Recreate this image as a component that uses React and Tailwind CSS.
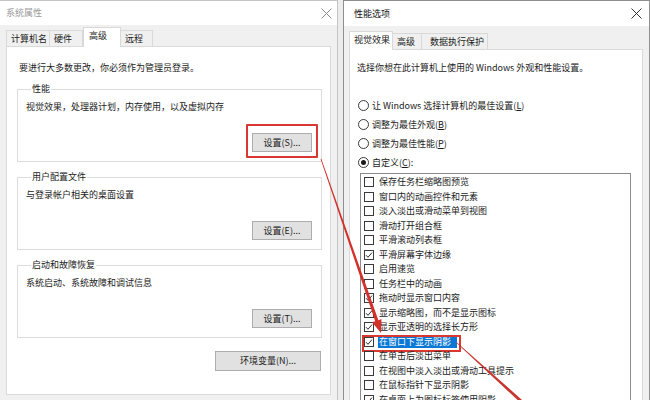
import React from "react";

function CloseX({ className = "" }) {
  return (
    <svg width="11" height="11" viewBox="0 0 11 11" className={className}>
      <path d="M0.5 0.5L10.5 10.5M10.5 0.5L0.5 10.5" stroke="currentColor" strokeWidth="1" />
    </svg>
  );
}

function Btn({ children, className = "", red = false }) {
  return (
    <div
      className={`relative h-[19px] bg-[#e1e1e1] border border-[#adadad] flex items-center justify-center text-[#1a1a1a] ${className}`}
    >
      {children}
      {red && (
        <span className="absolute left-[-7px] right-[-7px] top-[-10px] bottom-[-7px] border-2 border-[#d8382f] rounded-[1px]" />
      )}
    </div>
  );
}

function Group({ title, text, btn, red = false, className = "" }) {
  return (
    <fieldset className={`border border-[#dcdcdc] pl-[8px] pr-[9px] pb-[9px] ${className}`}>
      <legend className="ml-[5px] px-[1px] leading-[12px] text-[#1a1a1a]">{title}</legend>
      <div className="mt-[6px] leading-[12px]">{text}</div>
      <div className="flex justify-end mt-[20px]">
        <Btn className="w-[60px]" red={red}>{btn}</Btn>
      </div>
    </fieldset>
  );
}

function arrowPts(x1, y1, x2, y2, w1, w2, hl, hw) {
  const dx = x2 - x1, dy = y2 - y1, L = Math.hypot(dx, dy);
  const ux = dx / L, uy = dy / L, nx = -uy, ny = ux;
  const bx = x2 - ux * hl, by = y2 - uy * hl;
  const p = (x, y) => `${x.toFixed(1)},${y.toFixed(1)}`;
  return [
    p(x1 + nx * w1, y1 + ny * w1),
    p(bx + nx * w2, by + ny * w2),
    p(bx + nx * hw, by + ny * hw),
    p(x2, y2),
    p(bx - nx * hw, by - ny * hw),
    p(bx - nx * w2, by - ny * w2),
    p(x1 - nx * w1, y1 - ny * w1),
  ].join(" ");
}

const items = [
  ["保存任务栏缩略图预览", false],
  ["窗口内的动画控件和元素", false],
  ["淡入淡出或滑动菜单到视图", false],
  ["滑动打开组合框", false],
  ["平滑滚动列表框", false],
  ["平滑屏幕字体边缘", true],
  ["启用速览", false],
  ["任务栏中的动画", false],
  ["拖动时显示窗口内容", true],
  ["显示缩略图，而不是显示图标", true],
  ["显示亚透明的选择长方形", true],
  ["在窗口下显示阴影", true, true],
  ["在单击后淡出菜单", false],
  ["在视图中淡入淡出或滑动工具提示", false],
  ["在鼠标指针下显示阴影", false],
  ["在桌面上为图标标签使用阴影", true],
];

function Check({ on }) {
  return (
    <span className="w-[10px] h-[10px] border border-[#3a3a3a] bg-white flex items-center justify-center shrink-0">
      {on && (
        <svg width="8" height="8" viewBox="0 0 8 8">
          <path d="M1 4.2L3 6.3L7 1.6" stroke="#2a2a2a" strokeWidth="1" fill="none" />
        </svg>
      )}
    </span>
  );
}

function Radio({ on, children }) {
  return (
    <div className="h-[19px] flex items-center ml-[1px]">
      <span className="w-[11px] h-[11px] rounded-full border border-[#3a3a3a] bg-white flex items-center justify-center shrink-0">
        {on && <span className="w-[5px] h-[5px] rounded-full bg-[#1a1a1a]" />}
      </span>
      <span className="ml-[3px]">{children}</span>
    </div>
  );
}

export default function App() {
  return (
    <div className="relative w-[650px] h-[400px] overflow-hidden flex bg-[#e9e9e9] text-[9px] leading-[12px] text-[#1a1a1a] font-['Noto_Sans_CJK_SC','Noto_Sans',sans-serif]">
      {/* Left window: 系统属性 */}
      <div className="w-[338px] h-full flex flex-col bg-[#f0f0f0] border-r border-t border-[#c4c4c4] shrink-0">
        <div className="h-[24px] bg-white flex items-center justify-between pl-[6px] pr-[5px] text-[#9a9a9a]">
          <span>系统属性</span>
          <CloseX className="text-[#8a8a8a]" />
        </div>
        <div className="h-[21px] flex items-end pl-[6px]">
          <div className="w-[44px] h-[16px] border border-b-0 border-[#d9d9d9] bg-[#f0f0f0] pl-[4px] flex items-center">计算机名</div>
          <div className="w-[33px] h-[16px] border border-l-0 border-b-0 border-[#d9d9d9] bg-[#f0f0f0] pl-[4px] flex items-center">硬件</div>
          <div className="relative z-10 -mb-px w-[38px] h-[20px] border border-b-0 border-[#d9d9d9] bg-white pl-[5px] pt-[2px]">高级</div>
          <div className="w-[32px] h-[16px] border border-l-0 border-b-0 border-[#d9d9d9] bg-[#f0f0f0] pl-[4px] flex items-center">远程</div>
        </div>
        <div className="flex-1 mx-[6px] mb-[5px] bg-white border border-[#dadada] pt-[15px] pl-[10px] pr-[8px] flex flex-col">
          <div className="ml-[2px] leading-[12px]">要进行大多数更改，你必须作为管理员登录。</div>
          <Group className="mt-[9px]" title="性能" text="视觉效果，处理器计划，内存使用，以及虚拟内存" btn="设置(S)..." red />
          <Group className="mt-[9px]" title="用户配置文件" text="与登录帐户相关的桌面设置" btn="设置(E)..." />
          <Group className="mt-[9px]" title="启动和故障恢复" text="系统启动、系统故障和调试信息" btn="设置(T)..." />
          <div className="flex justify-end mt-[13px] pr-[1px]">
            <Btn className="w-[106px] h-[20px]">环境变量(N)...</Btn>
          </div>
        </div>
      </div>

      {/* gap strip */}
      <div className="w-[5px] h-full bg-[#ececec] shrink-0" />

      {/* Right window: 性能选项 */}
      <div className="flex-1 h-full flex flex-col bg-[#f0f0f0] border-l border-r border-t border-[#8f8f8f]">
        <div className="h-[25px] bg-white flex items-center justify-between pl-[10px] pr-[7px] text-[#111]">
          <span>性能选项</span>
          <CloseX className="text-[#333]" />
        </div>
        <div className="h-[23px] flex items-end pl-[5px]">
          <div className="relative z-10 -mb-px w-[44px] h-[19px] border border-b-0 border-[#d9d9d9] bg-white pl-[4px] pt-[2px]">视觉效果</div>
          <div className="w-[29px] h-[16px] border border-l-0 border-b-0 border-[#d9d9d9] bg-[#f0f0f0] pl-[4px] flex items-center">高级</div>
          <div className="w-[66px] h-[16px] border border-l-0 border-b-0 border-[#d9d9d9] bg-[#f0f0f0] pl-[8px] flex items-center">数据执行保护</div>
        </div>
        <div className="flex-1 ml-[5px] mr-[6px] bg-white border border-b-0 border-[#dadada] pt-[12px] pl-[7px] pr-[10px] flex flex-col min-h-0">
          <div className="leading-[12px]">选择你想在此计算机上使用的 Windows 外观和性能设置。</div>
          <div className="mt-[22px] flex flex-col">
            <Radio>让 Windows 选择计算机的最佳设置(<span className="underline">L</span>)</Radio>
            <Radio>调整为最佳外观(<span className="underline">B</span>)</Radio>
            <Radio>调整为最佳性能(<span className="underline">P</span>)</Radio>
            <Radio on>自定义(<span className="underline">C</span>):</Radio>
          </div>
          <div className="mt-[1px] ml-[3px] w-[271px] flex-1 border border-b-0 border-[#8c8c8c] bg-white pt-[1px] pl-[3px] overflow-hidden">
            {items.map(([label, on, sel]) => (
              <div key={label} className="relative h-[14.5px] flex items-center">
                <Check on={on} />
                {sel ? (
                  <span className="ml-[4px] pl-[1px] pr-[6px] bg-[#0a78d4] text-white leading-[13px]">{label}</span>
                ) : (
                  <span className="ml-[5px]">{label}</span>
                )}
                {sel && (
                  <span className="absolute left-[-2px] top-0 w-[99px] bottom-[-3px] border-2 border-[#d8382f]" />
                )}
              </div>
            ))}
          </div>
        </div>
      </div>

      {/* annotation arrows */}
      <svg className="absolute inset-0 pointer-events-none" width="650" height="400" viewBox="0 0 650 400">
        <polygon points={arrowPts(321, 159, 381, 333, 0.4, 1.7, 13, 5)} fill="#d3302a" />
        <polygon points={arrowPts(457, 343, 533, 412, 0.35, 1.6, 10, 4)} fill="#c8352e" />
      </svg>
    </div>
  );
}
